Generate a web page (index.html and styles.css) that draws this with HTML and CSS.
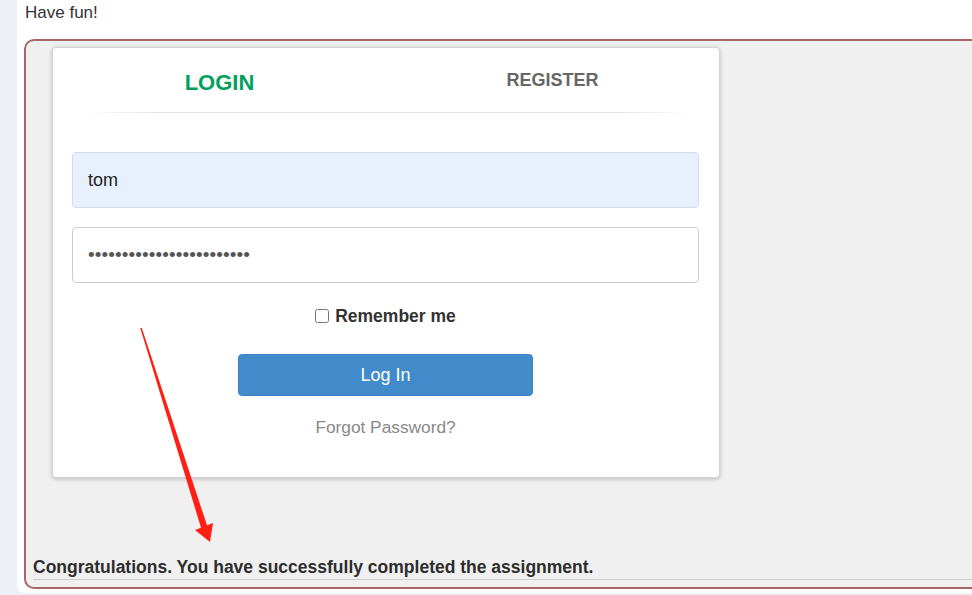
FILE: index.html
```html
<!DOCTYPE html>
<html lang="en">
<head>
<meta charset="utf-8">
<title>Login lesson</title>
<link rel="stylesheet" href="styles.css">
</head>
<body>
<div class="page">
  <p class="intro">Have fun!</p>
  <div class="exercise">
    <div class="card">
      <div class="tabs">
        <div class="tab tab-active">LOGIN</div>
        <div class="tab">REGISTER</div>
      </div>
      <div class="sep"></div>
      <form class="form">
        <input class="field field-filled" type="text" value="tom">
        <input class="field field-pass" type="password" value="thisisasecretfortomonly!">
        <label class="remember"><input class="check" type="checkbox"> Remember me</label>
        <button class="btn" type="button">Log In</button>
        <a class="forgot">Forgot Password?</a>
      </form>
    </div>
    <div class="congrats">Congratulations. You have successfully completed the assignment.</div>
  </div>
</div>
<svg class="annot" width="972" height="595" viewBox="0 0 972 595">
  <polygon fill="#ff1f14" points="140.3,328.2 141.7,327.8 207,525.3 213,523 210,542 195,530 201,527.7"/>
</svg>
</body>
</html>
```
FILE: styles.css
```css
html, body {
  margin: 0;
  height: 100%;
  overflow: hidden;
  background: #eef0f6;
  font-family: "Liberation Sans", Arial, sans-serif;
}

.page {
  margin-left: 17px;
  height: 593px;
  background: #fff;
  border-bottom-left-radius: 8px;
  padding-left: 7px;
  overflow: hidden;
}

.intro {
  margin: 0;
  padding-top: 3px;
  padding-left: 1px;
  font-size: 17px;
  line-height: 20px;
  color: #333;
}

.exercise {
  margin-top: 16px;
  width: 1000px;
  height: 550px;
  box-sizing: border-box;
  border: 2px solid #aa6666;
  border-radius: 10px;
  background: #f0f0f0;
  padding: 6px 0 7px 7px;
  display: flex;
  flex-direction: column;
}

.card {
  margin-left: 19px;
  width: 668px;
  height: 431px;
  box-sizing: border-box;
  background: #fff;
  border: 1px solid #d4d4d4;
  border-radius: 4px;
  box-shadow: 0 1px 4px rgba(0, 0, 0, 0.22);
}

.tabs {
  display: grid;
  grid-template-columns: 1fr 1fr;
  height: 64px;
}

.tab {
  text-align: center;
  font-weight: bold;
  font-size: 18px;
  line-height: 22px;
  padding-top: 21px;
  color: #666;
}

.tab-active {
  font-size: 22px;
  line-height: 26px;
  padding-top: 22px;
  color: #02a05c;
}

.sep {
  height: 1px;
  margin: 0 26px 0 32px;
  background: linear-gradient(to right, rgba(221,221,221,0), #e4e4e4 12%, #e4e4e4 88%, rgba(221,221,221,0));
}

.form {
  padding: 39px 20px 0 19px;
  display: flex;
  flex-direction: column;
  align-items: center;
}

.field {
  display: block;
  width: 100%;
  height: 56px;
  box-sizing: border-box;
  margin: 0;
  border: 1px solid #cccccc;
  border-radius: 4px;
  padding: 0 15px;
  font-family: "Liberation Sans", Arial, sans-serif;
  font-size: 18px;
  color: #222;
  background: #fff;
  outline: none;
}

.field-filled {
  background: #e8f0fe;
  border-color: #d5dbe4;
}

.field-pass {
  margin-top: 19px;
  font-size: 19px;
  letter-spacing: 0.1px;
  color: #555;
}

.remember {
  margin-top: 22px;
  display: flex;
  align-items: center;
  gap: 6px;
  font-size: 17.5px;
  line-height: 22px;
  font-weight: bold;
  color: #333;
}

.check {
  width: 14px;
  height: 14px;
  margin: 0;
}

.btn {
  margin-top: 27px;
  width: 295px;
  height: 42px;
  border: 1px solid #3d84c2;
  border-radius: 4px;
  background: #428bca;
  color: #fff;
  font-family: "Liberation Sans", Arial, sans-serif;
  font-size: 18px;
}

.forgot {
  margin-top: 21px;
  font-size: 17.3px;
  line-height: 20px;
  color: #888;
}

.congrats {
  margin-top: auto;
  font-size: 17.5px;
  line-height: 20px;
  font-weight: bold;
  color: #2d2d2d;
  padding: 0 0 2px 0;
  border-bottom: 1px solid #cccccc;
}

.annot {
  position: fixed;
  left: 0;
  top: 0;
  pointer-events: none;
}
```
